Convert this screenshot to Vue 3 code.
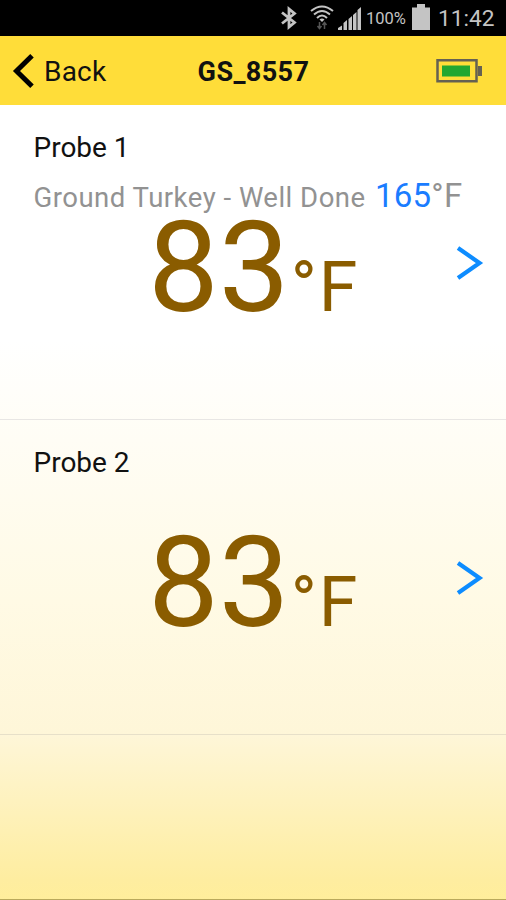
<template>
  <div class="screen">
    <div class="status-bar">
      <svg class="bluetooth" width="18" height="24" viewBox="0 0 18 24">
        <path d="M2 6.500L14.500 16.500L9 21V3L14.500 7.500L2 17.500" />
      </svg>
      <svg class="wifi" width="24" height="26" viewBox="0 0 24 26">
        <path d="M1 6Q12 -3 23 6M4 9.500Q12 2.500 20 9.500M7 13Q12 8 17 13" />
        <path class="dot" d="M9.500 14.500Q12 12.500 14.500 14.500L12 17Z" />
        <path class="traffic" d="M9.500 17V23M7.500 21L9.500 23.500L11.500 21M14.500 24V18M12.500 20L14.500 17.500L16.500 20" />
      </svg>
      <svg class="signal" width="24" height="24" viewBox="0 0 24 24">
        <path d="M0 24V22L4 19.500V24ZM5.500 24V17L9 14V24ZM10.500 24V13L14 10V24ZM15 24V9L18.500 6V24ZM19.500 24V4L23 1V24Z" />
      </svg>
      <span class="percent">100%</span>
      <svg class="phone-battery" width="18" height="27" viewBox="0 0 18 27">
        <path d="M0 3.500H5V0H13V3.500H18V26H0Z" />
      </svg>
      <span class="clock">11:42</span>
    </div>

    <header class="nav">
      <button class="back">
        <svg width="22" height="34" viewBox="0 0 22 34">
          <path d="M20 1.800L4.500 17L20 32.200" />
        </svg>
        <span>Back</span>
      </button>
      <h1 class="title">{{ device }}</h1>
      <svg class="battery" width="46" height="24" viewBox="0 0 46 24">
        <rect class="case" x="1.500" y="1.250" width="39" height="21" />
        <rect class="tip" x="42" y="7" width="4" height="10" />
        <rect class="level" x="6" y="6.500" width="28" height="11" />
      </svg>
    </header>

    <ul class="probes">
      <li v-for="probe in probes" :key="probe.id" class="probe">
        <div class="name">{{ probe.name }}</div>
        <div class="target">
          <template v-if="probe.target">
            <span class="meat">{{ probe.meat }}</span>
            <span class="goal">{{ probe.target }}</span>
            <span class="goal-unit">°F</span>
          </template>
        </div>
        <div class="reading">
          <span class="value">{{ probe.temp }}</span>
          <span class="degree">°</span>
          <span class="unit">F</span>
        </div>
        <svg class="chevron" width="28" height="36" viewBox="0 0 28 36">
          <path d="M2 3L23.500 18L2 33" />
        </svg>
      </li>
    </ul>
  </div>
</template>

<script setup>
import { ref } from "vue";

const device = ref("GS_8557");

const probes = ref([
  { id: 1, name: "Probe 1", meat: "Ground Turkey - Well Done", target: 165, temp: 83 },
  { id: 2, name: "Probe 2", meat: "", target: null, temp: 83 },
]);
</script>

<style>
body {
  margin: 0;
}
</style>

<style scoped>
.screen {
  box-sizing: border-box;
  width: 506px;
  height: 900px;
  overflow: hidden;
  border-bottom: 1px solid #b9a95c;
  font-family: Roboto, "Liberation Sans", sans-serif;
  background: linear-gradient(#fff 0, #fff 340px, #fffdf5 440px, #fffae5 600px, #fef6d8 735px, #feeda0 880px, #ffee9b 900px);
}
.status-bar {
  display: flex;
  align-items: center;
  height: 36px;
  padding-left: 280px;
  background: #000;
  color: #c4c4c4;
  white-space: nowrap;
}
.status-bar svg {
  flex: none;
}
.bluetooth {
  fill: none;
  stroke: #c4c4c4;
  stroke-width: 2.8;
}
.wifi {
  margin-left: 12px;
  fill: none;
  stroke: #c4c4c4;
  stroke-width: 2;
}
.wifi .dot {
  fill: #c4c4c4;
  stroke: none;
}
.wifi .traffic {
  stroke: #555;
  stroke-width: 1.5;
}
.signal {
  margin-left: 4px;
  fill: #c4c4c4;
}
.percent {
  width: 46px;
  margin-left: 4px;
  font-size: 16.5px;
}
.phone-battery {
  margin-bottom: 1px;
  fill: #c4c4c4;
}
.clock {
  margin-left: 8px;
  font-size: 22.7px;
}
.nav {
  display: grid;
  grid-template-columns: 1fr auto 1fr;
  align-items: center;
  height: 69px;
  padding: 0 24px 0 12px;
  background: #ffdd39;
  color: #111;
}
.back {
  display: flex;
  align-items: center;
  gap: 10px;
  padding: 0;
  border: 0;
  background: none;
  color: inherit;
  font: 28px Roboto, "Liberation Sans", sans-serif;
}
.back span {
  padding-top: 2px;
  letter-spacing: 0.2px;
}
.back path {
  fill: none;
  stroke: #000;
  stroke-width: 5;
}
.title {
  margin: 2px 0 0 13px;
  font-size: 27px;
  font-weight: 700;
  letter-spacing: 0.4px;
}
.battery {
  justify-self: end;
}
.battery .case {
  fill: none;
  stroke: #666152;
  stroke-width: 2.5;
}
.battery .tip {
  fill: #666152;
}
.battery .level {
  fill: #22a730;
}
.probes {
  margin: 0;
  padding: 0;
  list-style: none;
}
.probe {
  box-sizing: border-box;
  display: grid;
  grid-template-columns: 1fr 28px;
  grid-template-rows: 36px 40px 94px;
  height: 315px;
  padding: 25px 22px 0 33.5px;
  border-bottom: 1px solid rgba(90, 90, 110, 0.14);
}
.name {
  grid-column: 1;
  line-height: 36px;
  font-size: 28px;
  color: #111;
}
.target {
  grid-column: 1 / 3;
  display: flex;
  align-items: baseline;
  margin-top: 10px;
  line-height: 40px;
  color: #929292;
  white-space: nowrap;
}
.meat {
  font-size: 27.5px;
  letter-spacing: 0.49px;
}
.goal {
  margin-left: 9.5px;
  font-size: 33px;
  letter-spacing: 0.2px;
  color: #1a7cff;
}
.goal-unit {
  font-size: 33px;
  letter-spacing: 0.4px;
}
.reading {
  grid-column: 1;
  grid-row: 3;
  display: flex;
  align-items: baseline;
  margin-top: 15px;
  padding-left: 114.5px;
  line-height: 94px;
  color: #8a5c00;
}
.value {
  font-size: 126px;
}
.degree,
.unit {
  font-size: 70px;
}
.degree {
  margin-left: 1px;
}
.unit {
  margin-left: 2px;
}
.chevron {
  grid-column: 2;
  grid-row: 3;
  margin-top: 39px;
  fill: none;
  stroke: #0d8cff;
  stroke-width: 4.2;
}
</style>
